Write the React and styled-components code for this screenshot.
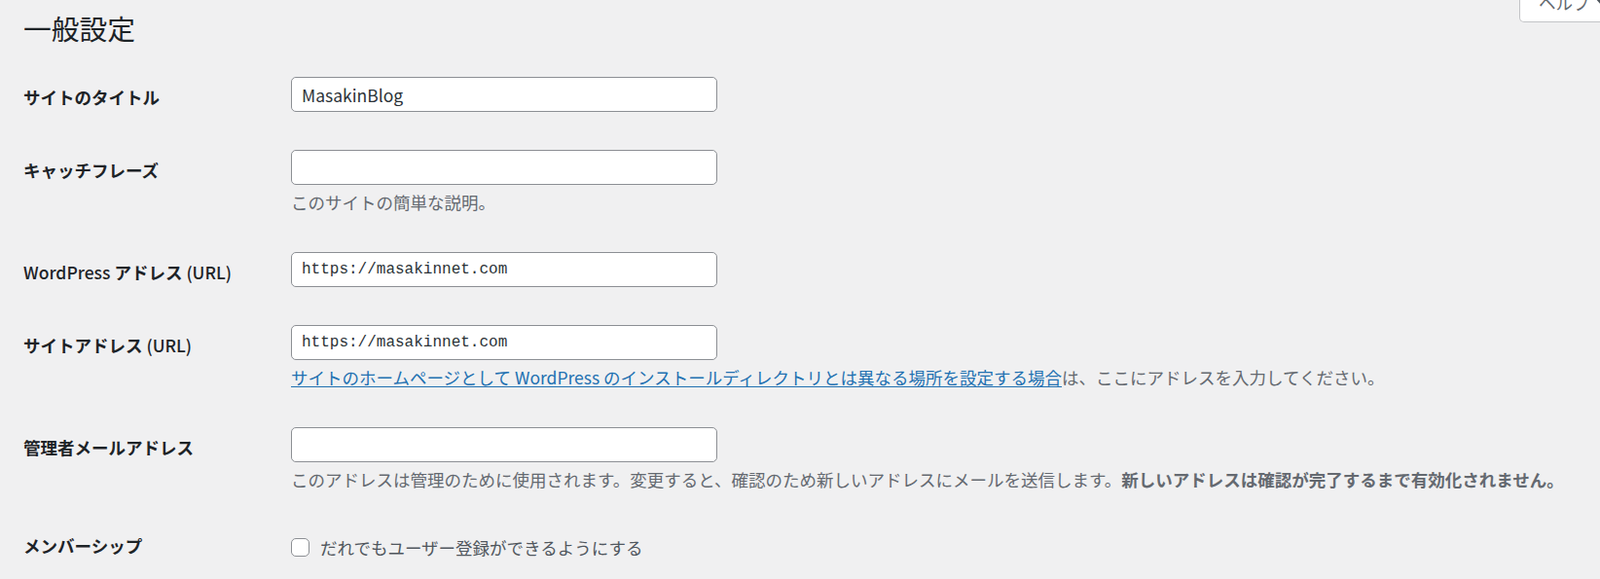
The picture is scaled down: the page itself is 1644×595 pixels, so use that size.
import React from "react";
import styled, { createGlobalStyle } from "styled-components";

const Global = createGlobalStyle`
  html, body { margin: 0; padding: 0; }
  body {
    background: #f0f0f1;
    overflow: hidden;
    font-family: "Noto Sans CJK JP", "Noto Sans", sans-serif;
    color: #1d2327;
  }
`;

const Page = styled.div`
  position: relative;
  width: 1644px;
  height: 595px;
  padding-left: 24px;
  box-sizing: border-box;
  overflow: hidden;
`;

const HelpTab = styled.button`
  position: absolute;
  top: -17px;
  left: 1561px;
  width: 110px;
  height: 40px;
  box-sizing: border-box;
  background: #fff;
  border: 1px solid #c3c4c7;
  border-top: none;
  border-radius: 0 0 5px 5px;
  padding: 0 0 0 19px;
  display: flex;
  align-items: center;
  gap: 5px;
  font-family: "Noto Sans CJK JP", sans-serif;
  font-size: 17.5px;
  color: #646970;
  cursor: pointer;
`;

const Arrow = styled.svg`
  flex: none;
  margin-top: -1px;
`;

const Title = styled.h1`
  margin: 0;
  padding-top: 10px;
  font-size: 28.75px;
  line-height: 37px;
  font-weight: 400;
  color: #1d2327;
  height: 50px;
`;

const Table = styled.div`
  display: flex;
  flex-direction: column;
`;

const Row = styled.div`
  display: grid;
  grid-template-columns: 275px 1fr;
`;

const Label = styled.div`
  padding-top: ${(p) => p.$top || 28}px;
  font-size: 17.5px;
  line-height: 24px;
  font-weight: 700;
  color: #1d2327;
  & span { font-weight: 500; }
`;

const Cell = styled.div`
  padding: 19px 0 20px;
`;

const Input = styled.input`
  box-sizing: border-box;
  display: block;
  width: 438px;
  height: 36px;
  margin: 0;
  padding: 0 10px;
  border: 1px solid #8c8f94;
  border-radius: 5px;
  background: #fff;
  color: #2c3338;
  font-family: ${(p) =>
    p.$code ? '"Liberation Mono", monospace' : '"Noto Sans CJK JP", sans-serif'};
  font-size: ${(p) => (p.$code ? "16px" : "17.5px")};
  outline: none;
`;

const Desc = styled.p`
  margin: 5px 0 0;
  font-size: 17.5px;
  line-height: 25px;
  color: #646970;
  white-space: nowrap;
  & b { font-weight: 700; }
`;

const Link = styled.a`
  color: #2271b1;
  text-decoration: underline;
  text-underline-offset: 2px;
`;

const CheckRow = styled.label`
  display: flex;
  align-items: center;
  gap: 11px;
  height: 36px;
  font-size: 17.5px;
  color: #50575e;
`;

const Check = styled.span`
  width: 19px;
  height: 19px;
  box-sizing: border-box;
  border: 1px solid #8c8f94;
  border-radius: 5px;
  background: #fff;
  flex: none;
`;

export default function App() {
  return (
    <>
      <Global />
      <Page>
        <HelpTab>
          ヘルプ
          <Arrow width="12" height="8" viewBox="0 0 12 8">
            <path d="M0 0 L12 0 L6 7 Z" fill="#50575e" />
          </Arrow>
        </HelpTab>
        <Title>一般設定</Title>
        <Table>
          <Row>
            <Label>サイトのタイトル</Label>
            <Cell>
              <Input defaultValue="MasakinBlog" />
            </Cell>
          </Row>
          <Row>
            <Label>キャッチフレーズ</Label>
            <Cell>
              <Input defaultValue="" />
              <Desc>このサイトの簡単な説明。</Desc>
            </Cell>
          </Row>
          <Row>
            <Label>
              <span>WordPress</span> アドレス <span>(URL)</span>
            </Label>
            <Cell>
              <Input $code defaultValue="https://masakinnet.com" />
            </Cell>
          </Row>
          <Row>
            <Label>
              サイトアドレス <span>(URL)</span>
            </Label>
            <Cell>
              <Input $code defaultValue="https://masakinnet.com" />
              <Desc>
                <Link href="#">
                  サイトのホームページとして WordPress のインストールディレクトリとは異なる場所を設定する場合
                </Link>
                は、ここにアドレスを入力してください。
              </Desc>
            </Cell>
          </Row>
          <Row>
            <Label>管理者メールアドレス</Label>
            <Cell>
              <Input defaultValue="" />
              <Desc>
                このアドレスは管理のために使用されます。変更すると、確認のため新しいアドレスにメールを送信します。
                <b>新しいアドレスは確認が完了するまで有効化されません。</b>
              </Desc>
            </Cell>
          </Row>
          <Row>
            <Label $top={24}>メンバーシップ</Label>
            <Cell>
              <CheckRow>
                <Check />
                だれでもユーザー登録ができるようにする
              </CheckRow>
            </Cell>
          </Row>
        </Table>
      </Page>
    </>
  );
}
